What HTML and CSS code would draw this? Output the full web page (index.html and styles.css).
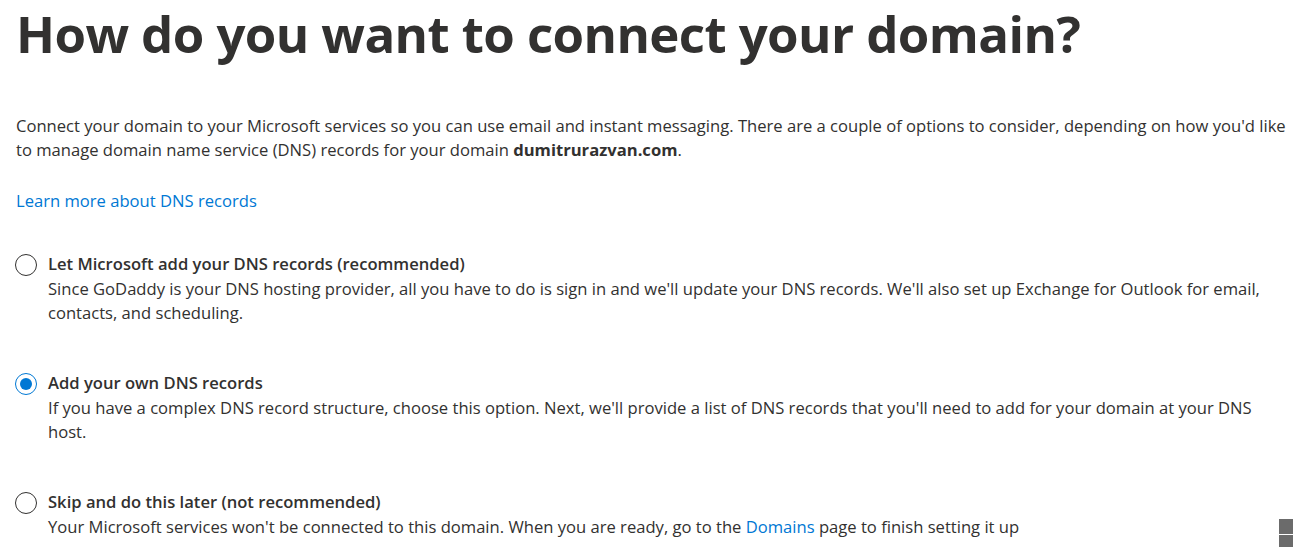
FILE: index.html
```html
<!DOCTYPE html>
<html lang="en">
<head>
<meta charset="utf-8">
<title>How do you want to connect your domain?</title>
<link rel="stylesheet" href="styles.css">
</head>
<body>
<main class="page">
  <h1 class="title">How do you want to connect your domain?</h1>
  <p class="intro">Connect your domain to your Microsoft services so you can use email and instant messaging. There are a couple of options to consider, depending on how you'd like to manage domain name service (DNS) records for your domain <strong>dumitrurazvan.com</strong>.</p>
  <a class="learn" href="#">Learn more about DNS records</a>
  <div class="options">
    <label class="option">
      <span class="radio"></span>
      <span class="option-text">
        <span class="option-title">Let Microsoft add your DNS records (recommended)</span>
        <span class="option-desc">Since GoDaddy is your DNS hosting provider, all you have to do is sign in and we'll update your DNS records. We'll also set up Exchange for Outlook for email, contacts, and scheduling.</span>
      </span>
    </label>
    <label class="option">
      <span class="radio checked"></span>
      <span class="option-text">
        <span class="option-title">Add your own DNS records</span>
        <span class="option-desc">If you have a complex DNS record structure, choose this option. Next, we'll provide a list of DNS records that you'll need to add for your domain at your DNS host.</span>
      </span>
    </label>
    <label class="option">
      <span class="radio"></span>
      <span class="option-text">
        <span class="option-title">Skip and do this later (not recommended)</span>
        <span class="option-desc">Your Microsoft services won't be connected to this domain. When you are ready, go to the <a class="inline-link" href="#">Domains</a> page to finish setting it up</span>
      </span>
    </label>
  </div>
</main>
<div class="feedback-tab"><span class="feedback-bar"></span></div>
</body>
</html>
```

FILE: styles.css
```css
html, body {
  margin: 0;
  padding: 0;
  background: #ffffff;
}
body {
  font-family: "Open Sans", "Noto Sans", sans-serif;
  color: #323130;
  overflow: hidden;
}
.page {
  padding: 0 0 0 16px;
  width: 1277px;
  display: flex;
  flex-direction: column;
  align-items: flex-start;
}
.title {
  margin: 0;
  font-size: 51px;
  line-height: 66px;
  font-weight: 700;
  color: #323130;
  letter-spacing: -0.6px;
  white-space: nowrap;
}
.intro {
  margin: 48px 0 0;
  font-size: 16.6px;
  line-height: 24px;
  width: 1277px;
}
.intro strong {
  font-weight: 700;
}
.learn {
  margin-top: 27px;
  font-size: 16.6px;
  line-height: 24px;
  color: #0078d4;
  text-decoration: none;
}
.options {
  margin-top: 39px;
  display: flex;
  flex-direction: column;
  gap: 46px;
}
.option {
  display: grid;
  grid-template-columns: 32px 1fr;
  align-items: start;
}
.radio {
  margin-top: 2px;
  margin-left: -1px;
  width: 22px;
  height: 22px;
  border: 1px solid #323130;
  border-radius: 50%;
  box-sizing: border-box;
  display: flex;
  align-items: center;
  justify-content: center;
}
.radio.checked {
  border-color: #0078d4;
}
.radio.checked::after {
  content: "";
  width: 12px;
  height: 12px;
  border-radius: 50%;
  background: #0078d4;
}
.option-text {
  display: flex;
  flex-direction: column;
}
.option-title {
  font-size: 16.6px;
  line-height: 24px;
  font-weight: 600;
}
.option-desc {
  margin-top: 1px;
  font-size: 16.6px;
  line-height: 24px;
  width: 1235px;
}
.inline-link {
  color: #0078d4;
  text-decoration: none;
}
.feedback-tab {
  position: fixed;
  right: 0;
  bottom: 0;
  width: 14px;
  height: 28px;
  background: #6b6b6b;
}
.feedback-bar {
  position: absolute;
  left: -2px;
  top: 15px;
  width: 16px;
  height: 1px;
  background: #ffffff;
}
```
